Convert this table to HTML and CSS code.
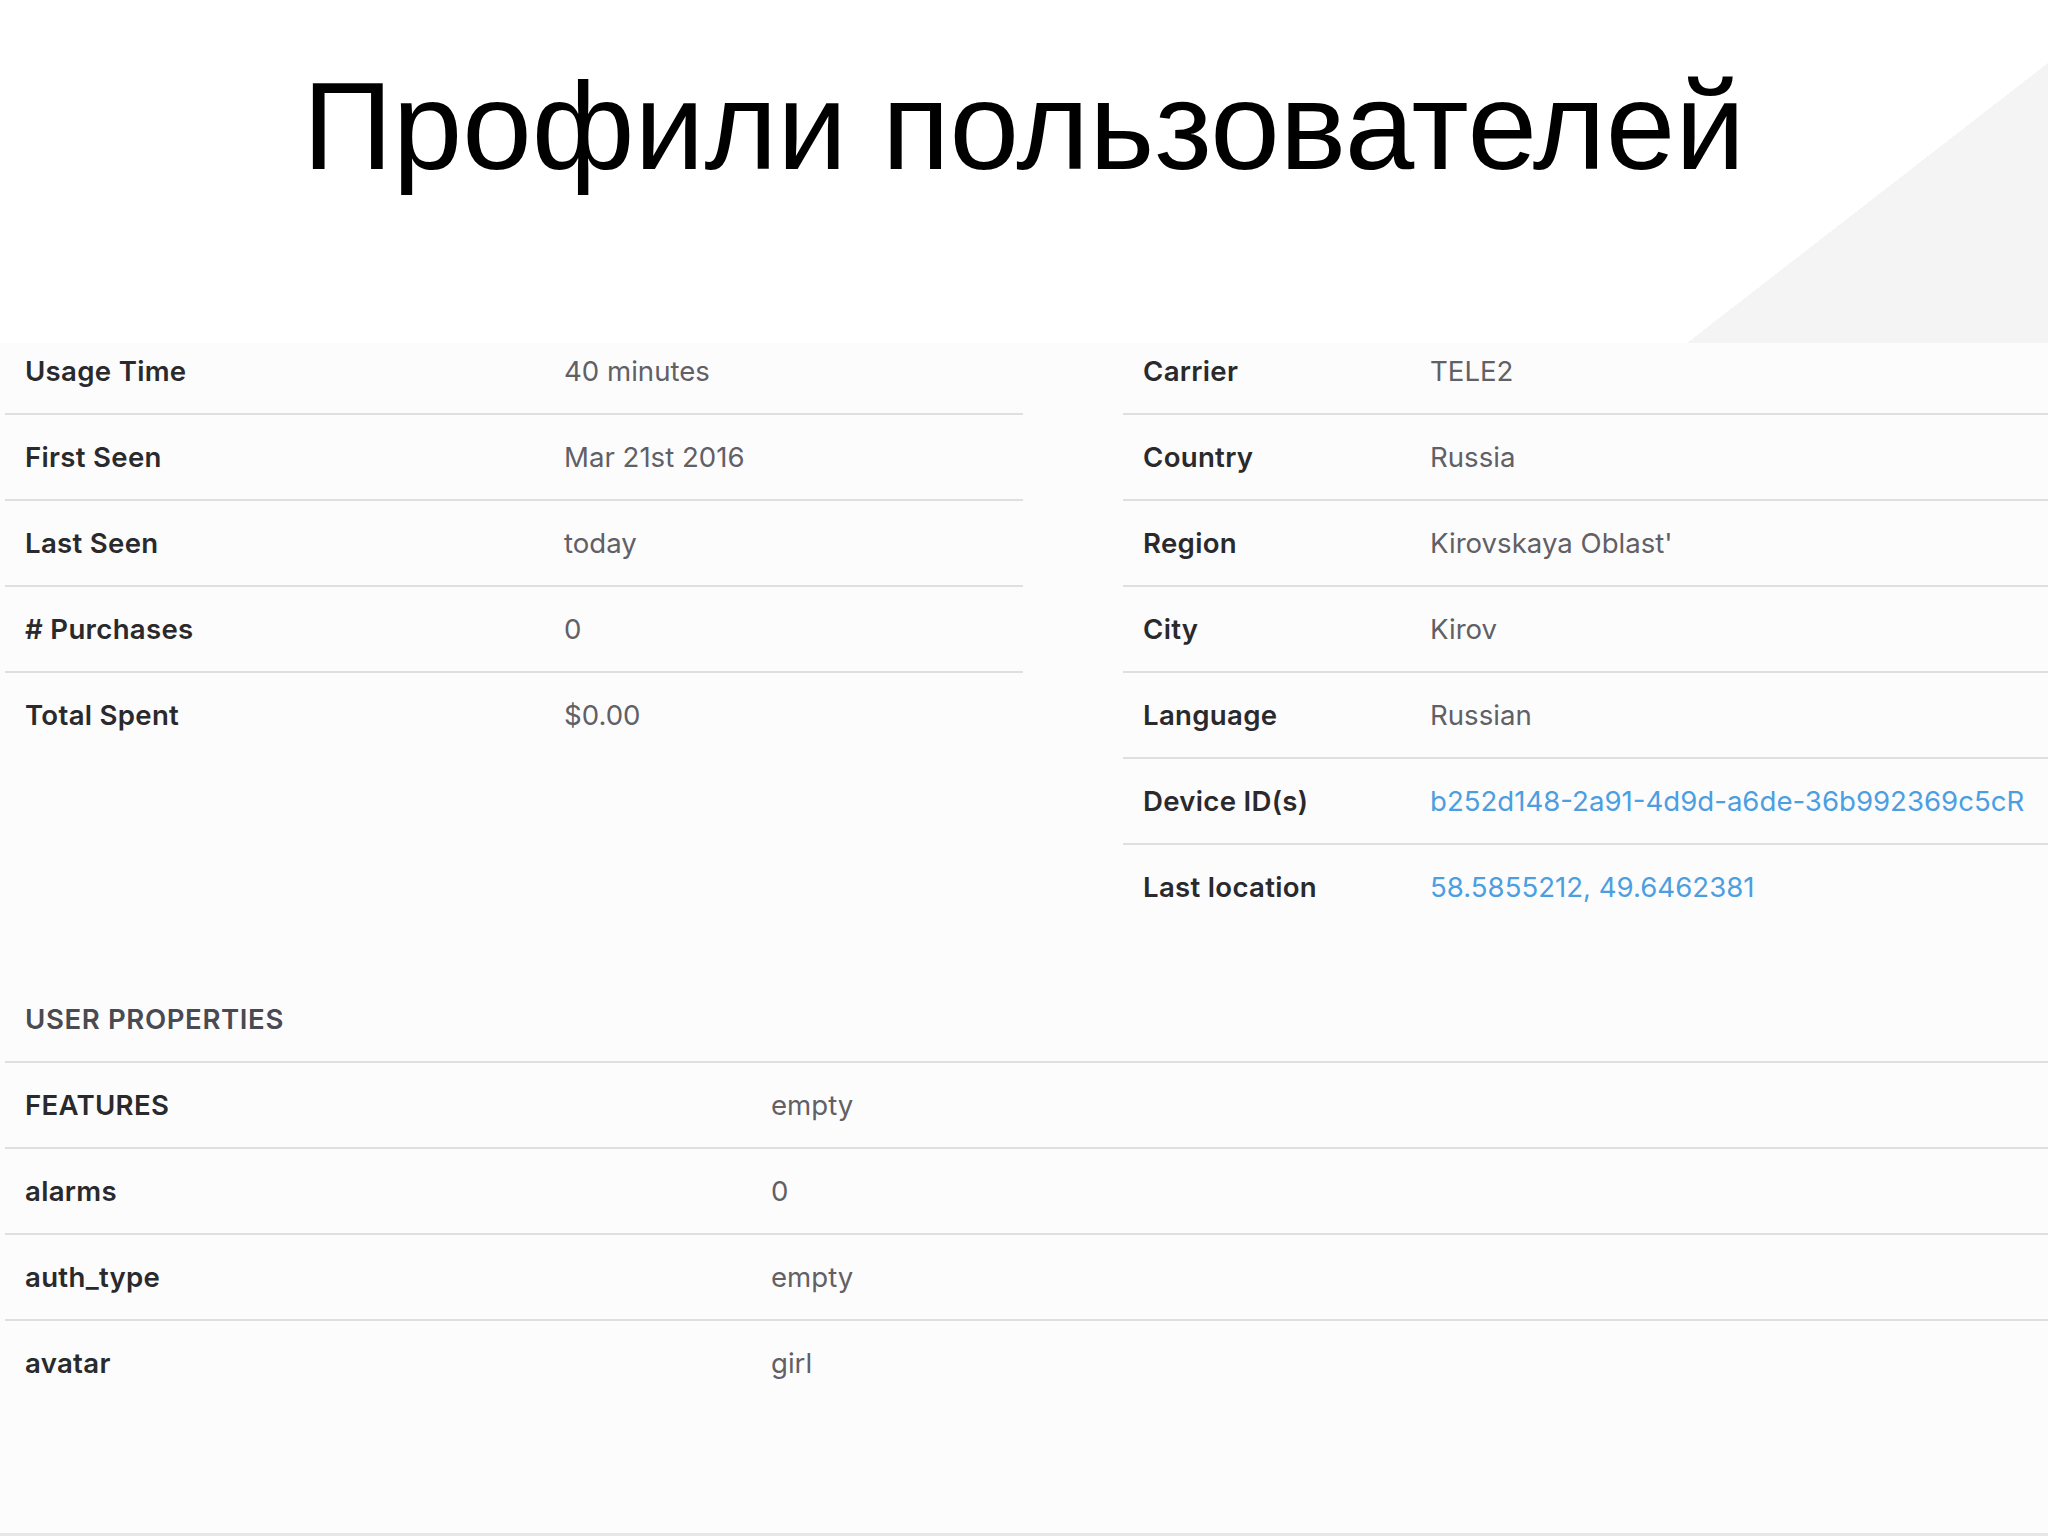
FILE: index.html
```html
<!DOCTYPE html>
<html lang="ru">
<head>
<meta charset="utf-8">
<title>Профили пользователей</title>
<link rel="stylesheet" href="styles.css">
</head>
<body>
<div class="slide">
  <header class="slide-head">
    <h1 class="slide-title">Профили пользователей</h1>
  </header>
  <main class="profile">
    <div class="summary">
      <div class="table table-left">
        <div class="row"><span class="key">Usage Time</span><span class="val">40 minutes</span></div>
        <div class="row"><span class="key">First Seen</span><span class="val">Mar 21st 2016</span></div>
        <div class="row"><span class="key">Last Seen</span><span class="val">today</span></div>
        <div class="row"><span class="key"># Purchases</span><span class="val">0</span></div>
        <div class="row"><span class="key">Total Spent</span><span class="val">$0.00</span></div>
      </div>
      <div class="table table-right">
        <div class="row"><span class="key">Carrier</span><span class="val">TELE2</span></div>
        <div class="row"><span class="key">Country</span><span class="val">Russia</span></div>
        <div class="row"><span class="key">Region</span><span class="val">Kirovskaya Oblast'</span></div>
        <div class="row"><span class="key">City</span><span class="val">Kirov</span></div>
        <div class="row"><span class="key">Language</span><span class="val">Russian</span></div>
        <div class="row"><span class="key">Device ID(s)</span><span class="val link">b252d148-2a91-4d9d-a6de-36b992369c5cR</span></div>
        <div class="row"><span class="key">Last location</span><span class="val link">58.5855212, 49.6462381</span></div>
      </div>
    </div>
    <section class="props">
      <div class="props-head">USER PROPERTIES</div>
      <div class="table table-props">
        <div class="row"><span class="key">FEATURES</span><span class="val">empty</span></div>
        <div class="row"><span class="key">alarms</span><span class="val">0</span></div>
        <div class="row"><span class="key">auth_type</span><span class="val">empty</span></div>
        <div class="row"><span class="key">avatar</span><span class="val">girl</span></div>
      </div>
    </section>
  </main>
</div>
</body>
</html>
```

FILE: styles.css
```css
* { box-sizing: content-box; }

html, body {
  margin: 0;
  padding: 0;
}

body {
  width: 2048px;
  height: 1536px;
  overflow: hidden;
  font-family: Inter, "Noto Sans", "Liberation Sans", sans-serif;
}

.slide {
  width: 2048px;
  height: 1536px;
  display: flex;
  flex-direction: column;
  background:
    linear-gradient(to bottom right, rgba(244,244,244,0) 50%, #f4f4f4 50%) right 0 top 63px / 361px 280px no-repeat,
    linear-gradient(#ffffff, #ffffff) left top / 100% 343px no-repeat,
    #fdfcfd;
}

.slide-head {
  height: 275px;
  padding-top: 54px;
}

.slide-title {
  margin: 0;
  font-family: "Liberation Sans", Arial, "Noto Sans", sans-serif;
  font-weight: 400;
  font-size: 125px;
  line-height: normal;
  color: #000;
  text-align: center;
}

.profile {
  flex: 1;
  border-bottom: 3px solid #e7e7e7;
}

.summary {
  display: grid;
  grid-template-columns: 1018px 925px;
  column-gap: 100px;
  padding-left: 5px;
  align-items: start;
}

.row {
  display: flex;
  align-items: center;
  height: 84px;
  padding-left: 20px;
  border-bottom: 2px solid #dfdfdf;
  font-size: 27.6px;
  line-height: 34px;
  white-space: nowrap;
}

.table .row:last-child {
  border-bottom: none;
}

.key {
  flex: none;
  font-weight: 600;
  letter-spacing: 0.3px;
  color: #2a2a2d;
}

.val {
  font-weight: 400;
  color: #606065;
}

.val.link {
  color: #4b9fe1;
}

.table-left .key { width: 539px; }
.table-right .key { width: 287px; }
.table-props .key { width: 746px; }

.props {
  margin-top: 48px;
  margin-left: 5px;
}

.props-head {
  display: flex;
  align-items: center;
  height: 84px;
  padding-left: 20px;
  border-bottom: 2px solid #dfdfdf;
  font-size: 27.6px;
  line-height: 34px;
  font-weight: 600;
  letter-spacing: 0.6px;
  color: #4a4a52;
}
```
